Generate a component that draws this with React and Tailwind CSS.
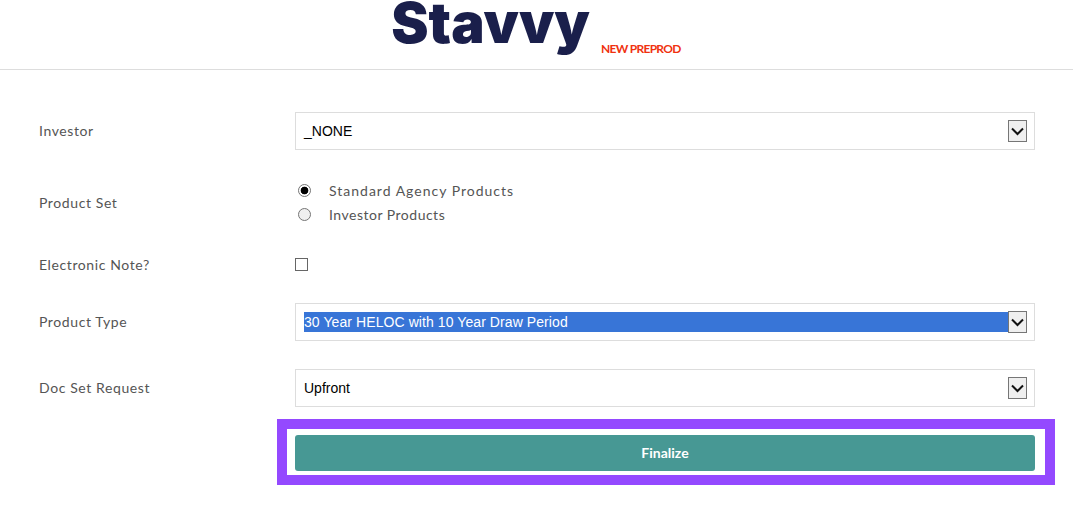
import { useState } from 'react';

const labelCls = "font-['Lato',sans-serif] text-[14px] text-[#555]";
const radioCls = "ml-[3px] h-[13px] w-[13px] appearance-none rounded-full border border-[#767676] bg-[#efefef] checked:bg-[radial-gradient(circle,#000_0,#000_3.5px,#fff_4.2px)]";

function Chevron() {
  return (
    <span className="flex h-[22px] w-[19px] shrink-0 items-center justify-center border border-[#767676] bg-[#efefef]">
      <svg width="13" height="9" viewBox="0 0 13 9" fill="none" stroke="#111" strokeWidth="2">
        <path d="M1 1.5 L6.5 7 L12 1.5" />
      </svg>
    </span>
  );
}

function FakeSelect({ value, selected }) {
  return (
    <div className="flex h-[38px] w-[740px] items-center border border-[#ddd] bg-white pl-2 pr-[7px] font-['Liberation_Sans',sans-serif] text-[14px] text-black">
      <span className={selected ? "flex h-5 flex-1 items-center bg-[#3875d7] tracking-[0.08px] text-white" : "flex-1"}>{value}</span>
      <Chevron />
    </div>
  );
}

function Row({ label, labelClass, className, children }) {
  return (
    <div className={`flex items-center ${className}`}>
      <div className={`w-[295px] shrink-0 pl-[39px] tracking-[0.6px] ${labelCls} ${labelClass}`}>{label}</div>
      {children}
    </div>
  );
}

export default function App() {
  const [productSet, setProductSet] = useState('standard');

  return (
    <div className="min-h-[511px] bg-white">
      <header className="flex h-[70px] justify-center border-b border-[#ddd]">
        <div className="ml-[-1px] flex items-start">
          <span className="mt-[-5px] font-['Inter',sans-serif] text-[56px] leading-[56px] font-black text-[#1a1f4b]">Stavvy</span>
          <span className="mt-[41px] ml-[11px] font-['Lato',sans-serif] text-[12px] leading-[16px] font-bold tracking-[-0.7px] text-[#f0320f]">NEW PREPROD</span>
        </div>
      </header>

      <main className="pt-[42px]">
        <Row label="Investor" labelClass="pb-[2px] tracking-[0.4px]">
          <FakeSelect value="_NONE" />
        </Row>

        <Row label="Product Set" className="mt-[30px]">
          <div className={`flex flex-col gap-[4px] ${labelCls}`}>
            <label className="flex h-[20px] items-center">
              <input type="radio" name="productSet" checked={productSet === 'standard'} onChange={() => setProductSet('standard')} className={radioCls} />
              <span className="ml-[18px] tracking-[1px]">Standard Agency Products</span>
            </label>
            <label className="flex h-[20px] items-center">
              <input type="radio" name="productSet" checked={productSet === 'investor'} onChange={() => setProductSet('investor')} className={radioCls} />
              <span className="ml-[18px] tracking-[0.5px]">Investor Products</span>
            </label>
          </div>
        </Row>

        <Row label="Electronic Note?" labelClass="pt-[1px]" className="mt-[29px]">
          <input type="checkbox" className="h-[13px] w-[13px] appearance-none border border-[#666] bg-white" />
        </Row>

        <Row label="Product Type" labelClass="pb-[2px]" className="mt-[28px]">
          <FakeSelect value="30 Year HELOC with 10 Year Draw Period" selected />
        </Row>

        <Row label="Doc Set Request" labelClass="pb-[2px]" className="mt-[28px]">
          <FakeSelect value="Upfront" />
        </Row>

        <div className="mt-[12px] ml-[277px] w-[778px] border-[10px] border-[#9449ff] pt-[6px] pr-[10px] pb-[4px] pl-[8px]">
          <button className="flex h-[36px] w-full items-center justify-center rounded-[3px] bg-[#479894] pb-[2px] font-['Lato',sans-serif] text-[14px] font-bold text-white">
            Finalize
          </button>
        </div>
      </main>
    </div>
  );
}
